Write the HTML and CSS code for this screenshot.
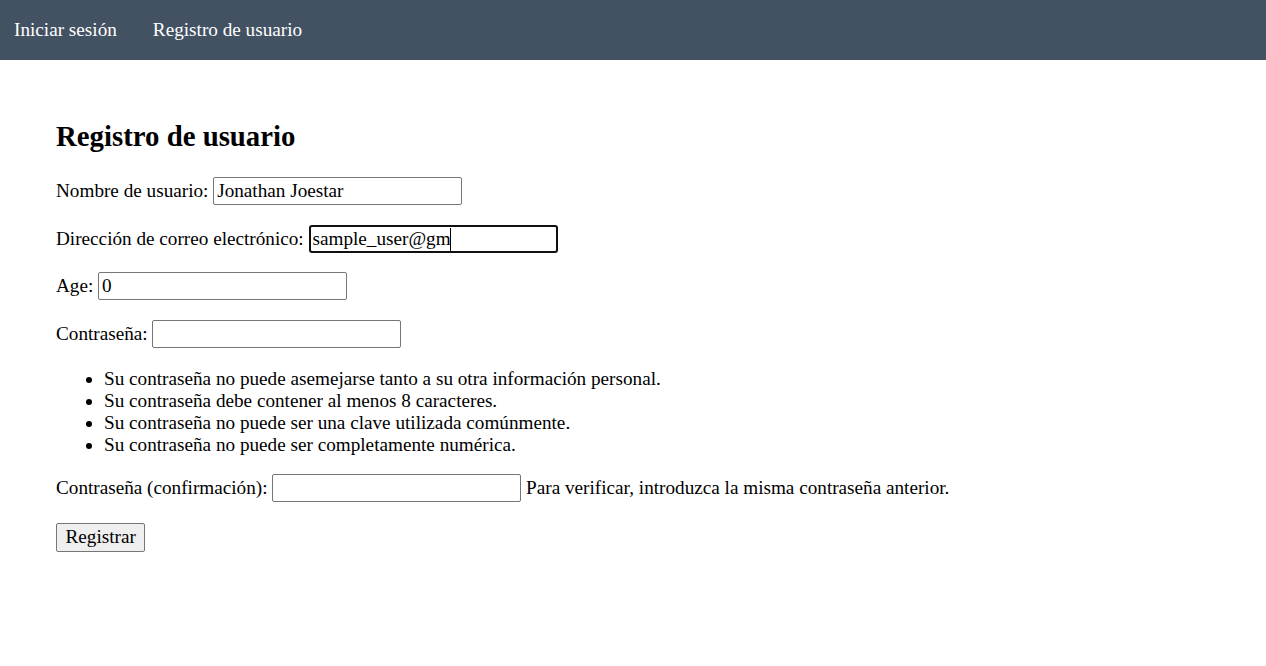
FILE: index.html
```html
<!DOCTYPE html>
<html lang="es">
<head>
<meta charset="utf-8">
<title>Registro de usuario</title>
<link rel="stylesheet" href="styles.css">
</head>
<body>
<nav class="topnav">
  <a class="nav-link" href="#">Iniciar sesión</a>
  <a class="nav-link" href="#">Registro de usuario</a>
</nav>
<main class="content">
  <h2 class="title">Registro de usuario</h2>
  <form class="form">
    <p class="row"><label>Nombre de usuario:</label> <input class="field" type="text" value="Jonathan Joestar"></p>
    <p class="row"><label>Dirección de correo electrónico:</label> <span class="field-wrap"><input class="field focused" type="text" value="sample_user@gm"><span class="caret"></span></span></p>
    <p class="row"><label>Age:</label> <input class="field" type="text" value="0"></p>
    <p class="row"><label>Contraseña:</label> <input class="field" type="password"></p>
    <ul class="rules">
      <li>Su contraseña no puede asemejarse tanto a su otra información personal.</li>
      <li>Su contraseña debe contener al menos 8 caracteres.</li>
      <li>Su contraseña no puede ser una clave utilizada comúnmente.</li>
      <li>Su contraseña no puede ser completamente numérica.</li>
    </ul>
    <p class="row"><label>Contraseña (confirmación):</label> <input class="field" type="password"> <span class="help">Para verificar, introduzca la misma contraseña anterior.</span></p>
    <p class="row"><button class="btn" type="button">Registrar</button></p>
  </form>
</main>
</body>
</html>
```
FILE: styles.css
```css
html, body {
  margin: 0;
  padding: 0;
  background: #fff;
}
body {
  font-family: "Liberation Serif", "Times New Roman", serif;
  font-size: 19.2px;
  color: #000;
}
.topnav {
  background: #435263;
  height: 60px;
  display: flex;
  align-items: center;
  padding-left: 14px;
  gap: 36px;
}
.nav-link {
  color: #fff;
  text-decoration: none;
  font-size: 19.2px;
}
.content {
  padding: 36px 56px 0;
}
.title {
  font-size: 28.8px;
  font-weight: bold;
  margin: 24px 0 24px;
}
.row {
  margin: 19.6px 0;
}
.field-wrap {
  position: relative;
  display: inline-block;
}
.caret {
  position: absolute;
  left: 141px;
  top: 3px;
  width: 1.5px;
  height: 23px;
  background: #000;
}
.field {
  box-sizing: border-box;
  width: 249px;
  height: 28px;
  border: 1px solid #767676;
  border-radius: 2px;
  padding: 1px 3px;
  font-family: "Liberation Serif", "Times New Roman", serif;
  font-size: 19.2px;
  color: #000;
  background: #fff;
  vertical-align: baseline;
}
.focused {
  border: 2px solid #101010;
  border-radius: 3px;
  padding: 0 2px;
  outline: none;
}
.rules {
  margin: 20.6px 0 18px;
  padding-left: 48px;
}
.rules + .row {
  margin-top: 18px;
}
.row:last-child {
  margin-top: 20.2px;
}
.btn {
  box-sizing: border-box;
  font-family: "Liberation Serif", "Times New Roman", serif;
  font-size: 19.2px;
  height: 29px;
  padding: 0 8.5px;
  background: #efefef;
  border: 1px solid #767676;
  border-radius: 2px;
  color: #000;
}
```
